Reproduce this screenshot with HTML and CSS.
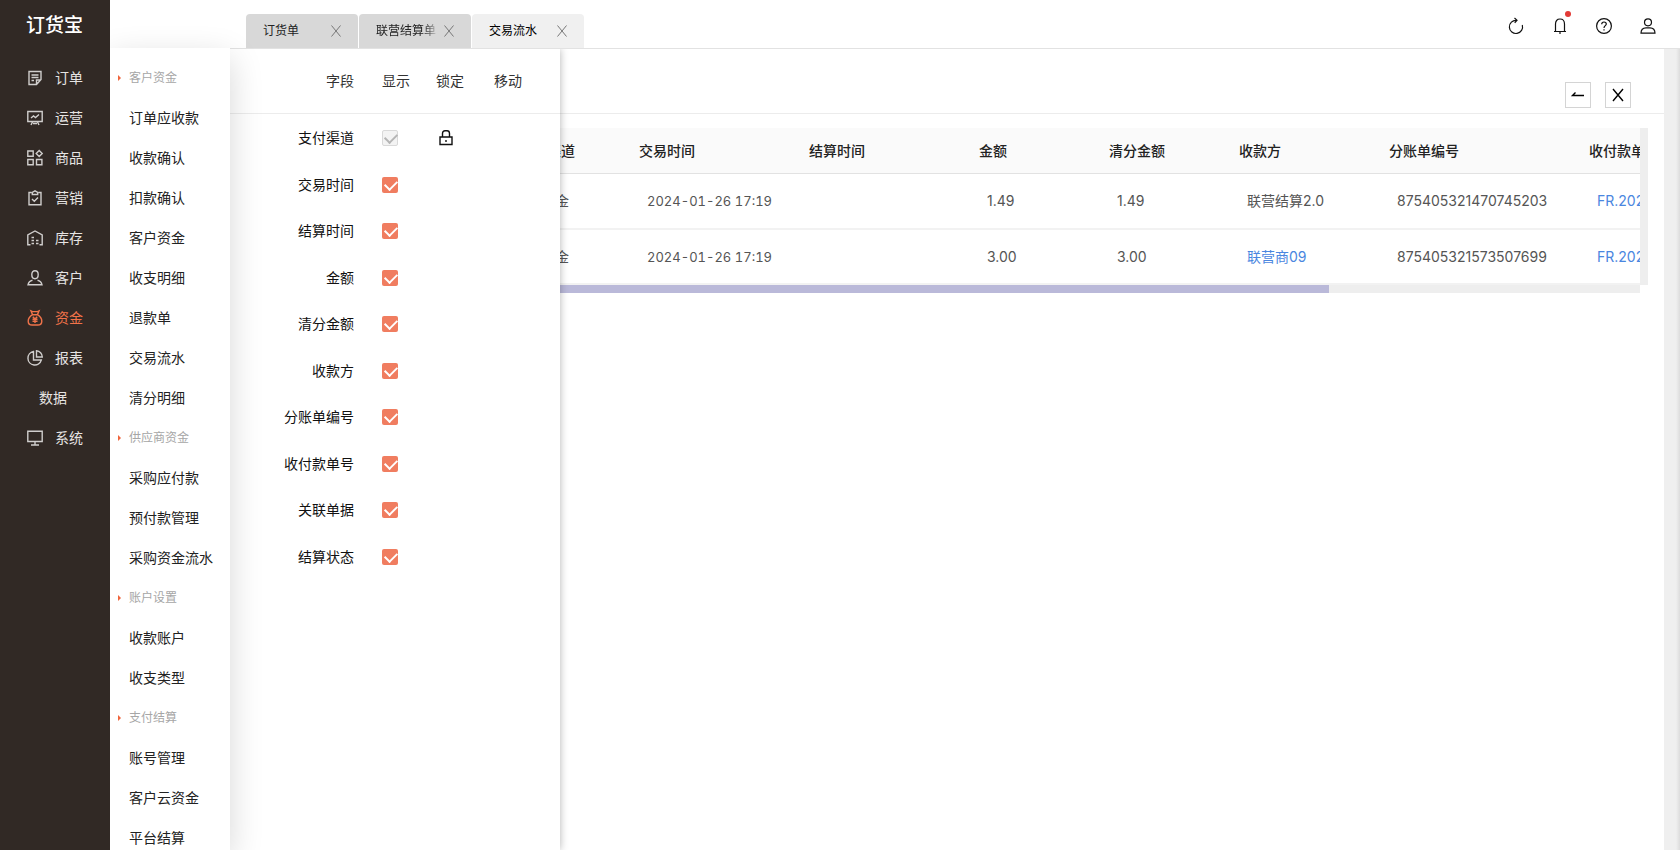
FILE: index.html
```html
<!DOCTYPE html>
<html lang="zh-CN">
<head>
<meta charset="utf-8">
<title>交易流水</title>
<link rel="stylesheet" href="styles.css">
</head>
<body>
<div class="app">
  <nav class="sidebar">
    <div class="logo">订货宝</div>
    <a class="nav-item" href="#"><svg class="icon" viewBox="0 0 16 16"><path d="M14 9.500V1.500H2v13h7.500zM9.500 14.500v-4.500H14M4.500 5h7M4.500 7.500h7M4.500 10.500h2.500"/></svg>订单</a>
    <a class="nav-item" href="#"><svg class="icon" viewBox="0 0 16 16"><path d="M.8 1.500h14.400v10H.8zM4 8l2.500-2 2 1.500L12 4.500M5.500 12l-1.500 3M10.500 12l1.500 3M6 13.500h4"/></svg>运营</a>
    <a class="nav-item" href="#"><svg class="icon" viewBox="0 0 16 16"><path d="M.8 1h5.400v5.200H.8zM.8 9.500h5.400v5.200H.8zM9.500 9.500h5.400v5.200H9.500zM12.200.6l3 3-3 3-3-3z"/></svg>商品</a>
    <a class="nav-item" href="#"><svg class="icon" viewBox="0 0 16 16"><path d="M4.500 2.500H2v12.300h12V2.500h-2.500M5.300 4.500V2.300L8 .8l2.700 1.500v2.200zM5 9l2.300 2.300L11 7.500"/></svg>营销</a>
    <a class="nav-item" href="#"><svg class="icon" viewBox="0 0 16 16"><path d="M3.500 14.800H.8V5L8 1l7.200 4v9.800h-2.700M4.500 7.500h2.500M4.500 10.500h2.500M9 10.500h2.500M4.500 13.500h2.500M9 13.500h2.500"/></svg>库存</a>
    <a class="nav-item" href="#"><svg class="icon" viewBox="0 0 16 16"><path d="M8 .8c2 0 3.200 1.500 3.200 3.700S10 8.700 8 8.700 4.800 6.700 4.800 4.500 6 .8 8 .8zM5.500 10.200c-3 .6-4 2-4.500 4.600h14c-.5-2.600-1.500-4-4.500-4.600"/></svg>客户</a>
    <a class="nav-item active" href="#"><svg class="icon" viewBox="0 0 16 16"><path d="M4 .9l1.500.7h5l1.500-.7-1.600 3.800H5.600zM5.600 4.700C2.500 6.500 1.200 9 1.200 11.200c0 2.500 1.600 3.800 4 3.800h5.600c2.400 0 4-1.300 4-3.800 0-2.200-1.300-4.700-4.400-6.500M5.800 6.700 8 9l2.200-2.300M8 9v4M5.500 9.300h5M5.500 11.300h5"/></svg>资金</a>
    <a class="nav-item" href="#"><svg class="icon" viewBox="0 0 16 16"><path d="M6.500 1.500A6.800 6.800 0 1 0 14.300 10H6.500zM9.500.8V7h5.800A6.300 6.300 0 0 0 9.500.8z"/></svg>报表</a>
    <a class="nav-item plain" href="#">数据</a>
    <a class="nav-item" href="#"><svg class="icon" viewBox="0 0 16 16"><path d="M.8 1.200h14.400v10.300H.8zM8 11.500v3M4 15h8"/></svg>系统</a>
  </nav>

  <div class="page">
    <header class="topbar">
      <div class="tabs">
        <div class="tab"><span class="tab-name">订货单</span><button class="tab-close" aria-label="关闭订货单"><svg viewBox="0 0 10 12"><path d="M.5.500l9 11M9.500.500l-9 11"/></svg></button></div>
        <div class="tab"><span class="tab-name clipped">联营结算单</span><button class="tab-close" aria-label="关闭联营结算单"><svg viewBox="0 0 10 12"><path d="M.5.500l9 11M9.500.500l-9 11"/></svg></button></div>
        <div class="tab current"><span class="tab-name">交易流水</span><button class="tab-close" aria-label="关闭交易流水"><svg viewBox="0 0 10 12"><path d="M.5.500l9 11M9.500.500l-9 11"/></svg></button></div>
      </div>
      <div class="tools">
        <button class="tool" aria-label="刷新"><svg class="icon" viewBox="0 0 16 16"><path d="M14.300 7A6.600 6.600 0 1 1 8.500 2.300M6.500 0 9 2.300 6.700 4.800"/></svg></button>
        <button class="tool" aria-label="通知"><svg class="icon" viewBox="0 0 16 16"><path d="M2 13.500h12M3.500 13.500V6c0-3 1.800-5 4.500-5s4.500 2 4.500 5v7.500M8 14v2"/></svg><span class="dot"></span></button>
        <button class="tool" aria-label="帮助"><svg class="icon" viewBox="0 0 16 16"><circle cx="8" cy="8" r="7.400"/><path d="M5.700 6.300c0-1.500 1-2.300 2.300-2.300s2.300.8 2.300 2.100C10.300 7.600 8 7.800 8 9.900M8 11.300v1.300"/></svg></button>
        <button class="tool" aria-label="账户"><svg class="icon" viewBox="0 0 16 16"><circle cx="8" cy="4.300" r="3.500"/><path d="M1 15.200c0-3.500 2-5.400 5-5.400h4c3 0 5 1.900 5 5.400z"/></svg></button>
      </div>
    </header>

    <div class="body">
      <nav class="submenu">
        <h2 class="group">客户资金</h2>
        <a href="#">订单应收款</a>
        <a href="#">收款确认</a>
        <a href="#">扣款确认</a>
        <a href="#">客户资金</a>
        <a href="#">收支明细</a>
        <a href="#">退款单</a>
        <a href="#">交易流水</a>
        <a href="#">清分明细</a>
        <h2 class="group">供应商资金</h2>
        <a href="#">采购应付款</a>
        <a href="#">预付款管理</a>
        <a href="#">采购资金流水</a>
        <h2 class="group">账户设置</h2>
        <a href="#">收款账户</a>
        <a href="#">收支类型</a>
        <h2 class="group">支付结算</h2>
        <a href="#">账号管理</a>
        <a href="#">客户云资金</a>
        <a href="#">平台结算</a>
      </nav>

      <main class="content">
        <div class="toolbar">
          <button class="square" aria-label="返回"><svg class="icon" viewBox="0 0 16 16"><path d="M14 8.500H2.500L5.500 5.500"/></svg></button>
          <button class="square" aria-label="关闭"><svg class="icon" viewBox="0 0 16 16"><path d="M3 2l10 12M13 2 3 14"/></svg></button>
        </div>

        <div class="grid-wrap">
          <div class="grid-view">
            <table class="grid">
              <colgroup><col class="w-lead"><col class="w-channel"><col class="w-time"><col class="w-time"><col class="w-sum"><col class="w-sum"><col class="w-payee"><col class="w-no"><col class="w-no"></colgroup>
              <thead>
                <tr><th></th><th>支付渠道</th><th>交易时间</th><th>结算时间</th><th>金额</th><th>清分金额</th><th>收款方</th><th>分账单编号</th><th>收付款单号</th></tr>
              </thead>
              <tbody>
                <tr><td></td><td>预存金</td><td class="time">2024-01-26 17:19</td><td></td><td>1.49</td><td>1.49</td><td>联营结算2.0</td><td>875405321470745203</td><td><a href="#">FR.2024</a></td></tr>
                <tr><td></td><td>预存金</td><td class="time">2024-01-26 17:19</td><td></td><td>3.00</td><td>3.00</td><td><a href="#">联营商09</a></td><td>875405321573507699</td><td><a href="#">FR.2024</a></td></tr>
              </tbody>
            </table>
          </div>
          <div class="v-track"></div>
          <div class="h-track"><div class="h-thumb"></div></div>
        </div>

        <aside class="drawer">
          <div class="field head"><span class="name">字段</span><span>显示</span><span>锁定</span><span>移动</span></div>
          <div class="fields">
            <div class="field"><label class="name" for="f1">支付渠道</label><input type="checkbox" id="f1" checked disabled><svg class="lock" viewBox="0 0 20 16"><path d="M4 7h12v7.500H4zM6.500 7V3.500C6.500 1.700 7.500.8 9 .8h2c1.500 0 2.500.9 2.500 2.700V7M10 10v2"/></svg></div>
            <div class="field"><label class="name" for="f2">交易时间</label><input type="checkbox" id="f2" checked></div>
            <div class="field"><label class="name" for="f3">结算时间</label><input type="checkbox" id="f3" checked></div>
            <div class="field"><label class="name" for="f4">金额</label><input type="checkbox" id="f4" checked></div>
            <div class="field"><label class="name" for="f5">清分金额</label><input type="checkbox" id="f5" checked></div>
            <div class="field"><label class="name" for="f6">收款方</label><input type="checkbox" id="f6" checked></div>
            <div class="field"><label class="name" for="f7">分账单编号</label><input type="checkbox" id="f7" checked></div>
            <div class="field"><label class="name" for="f8">收付款单号</label><input type="checkbox" id="f8" checked></div>
            <div class="field"><label class="name" for="f9">关联单据</label><input type="checkbox" id="f9" checked></div>
            <div class="field"><label class="name" for="f10">结算状态</label><input type="checkbox" id="f10" checked></div>
          </div>
        </aside>
      </main>
      <div class="edge"></div>
    </div>
  </div>
</div>
</body>
</html>
```
FILE: styles.css
```css
* { box-sizing: border-box; }

body {
  margin: 0;
  font: 14px/20px Inter, "Noto Sans CJK SC", sans-serif;
  color: #222;
  background: #fff;
}

a { color: inherit; text-decoration: none; }
button { padding: 0; border: 0; background: none; color: inherit; font: inherit; }

.app { display: flex; height: 100vh; overflow: hidden; }

.icon {
  width: 16px;
  height: 16px;
  fill: none;
  stroke: currentColor;
  stroke-width: 1.4;
  overflow: visible;
}

/* primary navigation */
.sidebar { flex: 0 0 110px; background: #312925; color: #e6e4e3; }
.logo {
  height: 58px;
  padding: 12px 0 0 26px;
  font-size: 19px;
  font-weight: 500;
  line-height: 28px;
  color: #fff;
}
.nav-item {
  display: flex;
  align-items: center;
  gap: 12px;
  height: 40px;
  padding-left: 27px;
}
.nav-item .icon { color: #d0cecd; }
.nav-item.plain { padding-left: 39px; }
.nav-item.active, .nav-item.active .icon { color: #f0734a; }

.page { flex: 1; min-width: 0; display: flex; flex-direction: column; }

/* top bar */
.topbar {
  flex: 0 0 49px;
  display: flex;
  justify-content: space-between;
  align-items: flex-end;
  padding-left: 136px;
  border-bottom: 1px solid #e2e2e2;
}
.tabs { display: flex; gap: 1px; }
.tab {
  display: flex;
  justify-content: space-between;
  align-items: center;
  width: 112px;
  height: 34px;
  padding: 0 17px;
  border-radius: 4px 4px 0 0;
  background: #d8d8d8;
  font-size: 12px;
}
.tab.current { background: #f0f0f0; color: #000; }
.tab-name { white-space: nowrap; }
.tab-name.clipped {
  -webkit-mask-image: linear-gradient(to right, #000 80%, rgba(0, 0, 0, 0.2));
  mask-image: linear-gradient(to right, #000 80%, rgba(0, 0, 0, 0.2));
}
.tab-close { display: flex; }
.tab-close svg { width: 10px; height: 12px; fill: none; stroke: #777; }
.tools { display: flex; gap: 28px; padding: 0 24px 14px 0; color: #111; }
.tool { position: relative; display: flex; }
.tool .icon { stroke-width: 1.2; }
.dot {
  position: absolute;
  top: -7px;
  right: -3px;
  width: 6px;
  height: 6px;
  border-radius: 50%;
  background: #e23a36;
}

.body { flex: 1; min-height: 0; display: flex; }

/* secondary navigation */
.submenu {
  position: relative;
  z-index: 2;
  flex: 0 0 120px;
  margin-top: -1px;
  padding-top: 10px;
  background: #fff;
  box-shadow: 0 10px 32px rgba(0, 0, 0, 0.16);
  clip-path: inset(-40px -40px 0 0);
}
.submenu a, .group { display: flex; align-items: center; height: 40px; padding-left: 19px; }
.group {
  gap: 8px;
  margin: 0;
  padding-left: 8px;
  font-size: 12px;
  font-weight: 400;
  color: #a6a6a6;
}
.group::before {
  content: "";
  border: solid transparent;
  border-width: 3px 0 3px 3px;
  border-left-color: #f0653c;
}

.content { position: relative; flex: 1; min-width: 0; }
.edge { flex: 0 0 16px; background: linear-gradient(to right, #efefef 75%, #dcdcdc); }

.toolbar {
  display: flex;
  justify-content: flex-end;
  align-items: flex-end;
  gap: 14px;
  height: 65px;
  padding: 0 33px 5px 0;
  border-bottom: 1px solid #ececec;
}
.square {
  display: flex;
  align-items: center;
  justify-content: center;
  width: 26px;
  height: 26px;
  border: 1px solid #d4d4d4;
  color: #000;
}

/* transactions table */
.grid-wrap {
  display: grid;
  grid-template-columns: minmax(0, 1fr) 8px;
  margin: 14px 16px 0;
}
.grid-view { overflow: hidden; }
.grid { width: 1535px; table-layout: fixed; border-collapse: separate; border-spacing: 0; }
.w-lead { width: 265px; }
.w-channel { width: 120px; }
.w-time { width: 170px; }
.w-sum { width: 130px; }
.w-payee { width: 150px; }
.w-no { width: 200px; }
.grid th {
  height: 46px;
  padding: 0 8px;
  border-bottom: 1px solid #e2e2e2;
  background: #fafafa;
  font-weight: 500;
  text-align: left;
}
.grid td {
  height: 56px;
  padding: 0 16px;
  border-bottom: 2px solid #f2f2f2;
  color: #555;
}
.grid tr:last-child td { height: 55px; }
.grid .time { font-size: 13px; font-variant-numeric: tabular-nums; }
.grid td a { color: #4a86e0; }
.v-track { background: #eee; }
.h-track { height: 8px; background: #eee; }
.h-thumb { width: 1083px; max-width: 78%; height: 8px; background: #bab9d9; }

/* column settings drawer */
.drawer {
  position: absolute;
  top: 0;
  bottom: 0;
  left: 0;
  width: 330px;
  background: #fff;
  box-shadow: 0 0 8px rgba(0, 0, 0, 0.3);
  clip-path: inset(0 -12px 0 0);
  color: #111;
}
.field {
  display: grid;
  grid-template-columns: 124px 54px 58px 1fr;
  align-items: center;
  padding-left: 28px;
}
.name { padding-right: 28px; text-align: right; }
.field.head { height: 65px; border-bottom: 1px solid #ececec; color: #333; }
.fields { display: grid; grid-auto-rows: 1fr; height: 465px; margin-top: 1px; }
.field input {
  position: relative;
  appearance: none;
  width: 16px;
  height: 16px;
  margin: 0;
  border-radius: 2px;
  background: #f07d60;
}
.field input::after {
  content: "";
  position: absolute;
  top: 4px;
  left: 3px;
  width: 10px;
  height: 6px;
  border: solid #fff;
  border-width: 0 0 2px 2px;
  transform: translateY(-1px) rotate(-45deg);
}
.field input:disabled { background: #f3f3f3; border: 1px solid #d9d9d9; }
.field input:disabled::after { top: 3px; left: 2px; border-color: #b5b5b5; }
.lock { width: 20px; height: 16px; fill: none; stroke: #111; stroke-width: 1.4; }
```
